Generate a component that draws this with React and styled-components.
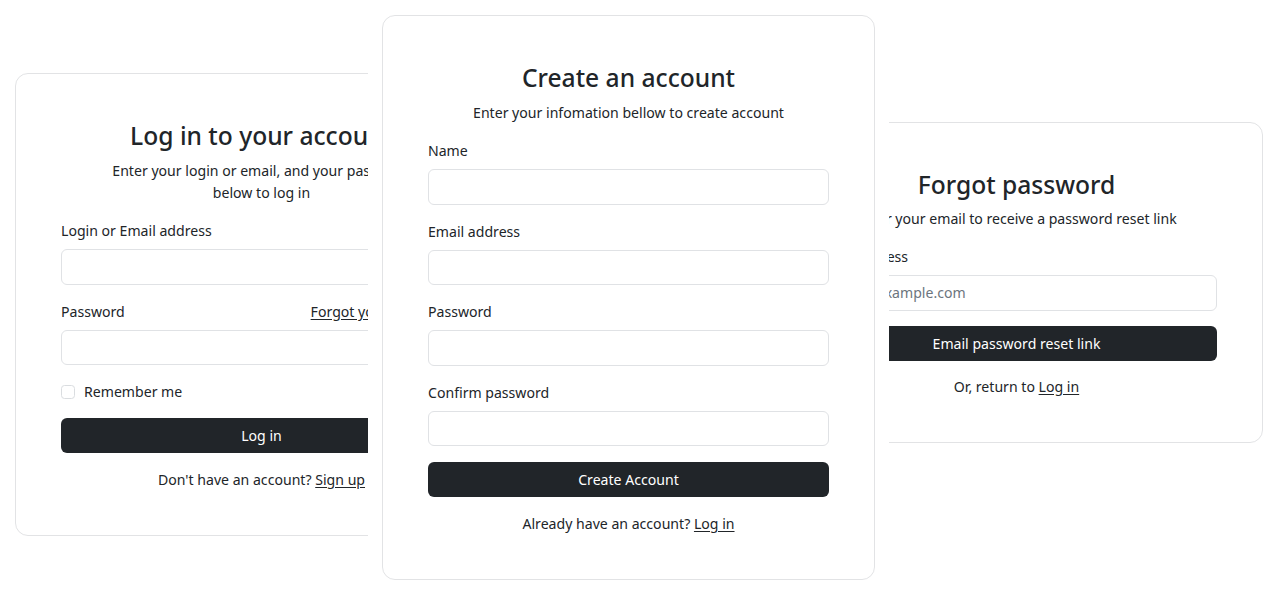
import React from "react";
import styled, { createGlobalStyle } from "styled-components";

const Global = createGlobalStyle`
  html, body { margin: 0; padding: 0; background: #fff; }
  body { font-family: "Noto Sans", "Open Sans", Arial, sans-serif; color: #212529; }
  * { box-sizing: border-box; }
`;

const Page = styled.div`
  display: flex;
  align-items: flex-start;
  gap: 14px;
  padding-left: 15px;
  height: 589px;
  overflow: hidden;
`;

const Panel = styled.div`
  flex: 0 0 ${(p) => p.$width}px;
  width: ${(p) => p.$width}px;
  margin-top: ${(p) => p.$top}px;
  overflow: hidden;
  display: flex;
  justify-content: ${(p) => (p.$alignRight ? "flex-end" : "flex-start")};
`;

const Card = styled.div`
  flex: 0 0 493px;
  width: 493px;
  border: 1px solid #e2e3e5;
  border-radius: 13px;
  background: #fff;
  padding: 46px 45px 44px;
  display: flex;
  flex-direction: column;
`;

const Title = styled.h3`
  margin: 0;
  font-size: 24.6px;
  line-height: 31px;
  font-weight: 500;
  text-align: center;
  color: #212529;
`;

const Subtitle = styled.p`
  margin: ${(p) => p.$mt ?? 9}px 0 16px;
  font-size: 14.1px;
  line-height: 22px;
  text-align: center;
  color: #212529;
`;

const Group = styled.div`
  margin-bottom: ${(p) => p.$mb ?? 16}px;
  display: flex;
  flex-direction: column;
`;

const LabelRow = styled.div`
  display: flex;
  justify-content: space-between;
  align-items: center;
  margin-bottom: 7px;
`;

const Label = styled.label`
  font-size: 14.1px;
  line-height: 22px;
  color: #212529;
`;

const TextLink = styled.a`
  font-size: 14.1px;
  line-height: 22px;
  color: #212529;
  text-decoration: underline;
  text-underline-offset: 2px;
  white-space: nowrap;
`;

const Input = styled.input`
  display: block;
  width: 100%;
  height: 35.5px;
  border: 1px solid #e0e2e5;
  border-radius: 6px;
  padding: 0 11px;
  font-family: inherit;
  font-size: 14.1px;
  color: #212529;
  outline: none;
  &::placeholder { color: #6c757d; }
`;

const CheckRow = styled.div`
  display: flex;
  align-items: center;
  gap: 9px;
  margin-bottom: 15px;
  height: 22px;
`;

const Box = styled.span`
  width: 14px;
  height: 14px;
  border: 1px solid #dadde0;
  border-radius: 3.5px;
  flex: 0 0 14px;
`;

const Button = styled.button`
  width: 100%;
  height: 35px;
  border: none;
  border-radius: 6px;
  background: #212529;
  color: #fff;
  font-family: inherit;
  font-size: 14.1px;
  cursor: pointer;
`;

const Footer = styled.p`
  margin: ${(p) => p.$mt ?? 16}px 0 0;
  font-size: 14.1px;
  line-height: 22px;
  text-align: center;
  color: #212529;
  white-space: nowrap;
`;

function Field({ label, extra, placeholder, type = "text", mb }) {
  return (
    <Group $mb={mb}>
      <LabelRow>
        <Label>{label}</Label>
        {extra}
      </LabelRow>
      <Input type={type} placeholder={placeholder} />
    </Group>
  );
}

export default function App() {
  return (
    <>
      <Global />
      <Page>
        <Panel $width={353} $top={73}>
          <Card>
            <Title>Log in to your account</Title>
            <Subtitle>
              Enter your login or email, and your password
              <br />
              below to log in
            </Subtitle>
            <Field label="Login or Email address" />
            <Field
              label="Password"
              type="password"
              extra={<TextLink href="#">Forgot your password?</TextLink>}
            />
            <CheckRow>
              <Box />
              <Label>Remember me</Label>
            </CheckRow>
            <Button>Log in</Button>
            <Footer>
              Don't have an account? <TextLink href="#">Sign up</TextLink>
            </Footer>
          </Card>
        </Panel>
        <Panel $width={493} $top={15}>
          <Card>
            <Title>Create an account</Title>
            <Subtitle>Enter your infomation bellow to create account</Subtitle>
            <Field label="Name" />
            <Field label="Email address" />
            <Field label="Password" type="password" />
            <Field label="Confirm password" type="password" />
            <Button>Create Account</Button>
            <Footer>
              Already have an account? <TextLink href="#">Log in</TextLink>
            </Footer>
          </Card>
        </Panel>
        <Panel $width={374} $top={122} $alignRight>
          <Card>
            <Title>Forgot password</Title>
            <Subtitle $mt={8}>Enter your email to receive a password reset link</Subtitle>
            <Field label="Email address" placeholder="email@example.com" mb={15} />
            <Button>Email password reset link</Button>
            <Footer $mt={15}>
              Or, return to <TextLink href="#">Log in</TextLink>
            </Footer>
          </Card>
        </Panel>
      </Page>
    </>
  );
}
